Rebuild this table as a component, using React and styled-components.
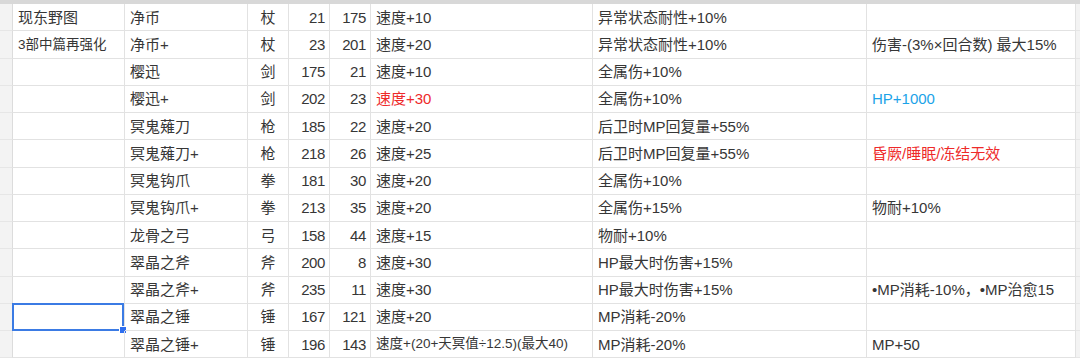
import React from "react";
import styled, { createGlobalStyle, css } from "styled-components";

const Global = createGlobalStyle`
  html, body { margin: 0; padding: 0; background: #ffffff; }
  body { font-family: "Liberation Sans", "Noto Sans CJK SC", sans-serif; }
`;

const Page = styled.div`
  width: 1080px;
  height: 361px;
  overflow: hidden;
  background: #ffffff;
`;

const HeaderBand = styled.div`
  height: 4px;
  background: #d8d8d8;
`;

const Sheet = styled.div`
  display: grid;
  grid-template-columns: 13px 112px 123px 41px 41px 41px 222px 274px 209px 1fr;
  grid-auto-rows: 27.25px;
`;

const Cell = styled.div`
  position: relative;
  box-sizing: border-box;
  border-right: 1px solid #e2e2e2;
  border-bottom: 1px solid #e2e2e2;
  display: flex;
  align-items: center;
  padding: 0 5px;
  font-size: ${(p) => (p.$small ? "13.5px" : "15px")};
  line-height: 1;
  color: ${(p) => p.$color || "#363636"};
  white-space: nowrap;
  overflow: visible;
  justify-content: ${(p) =>
    p.$align === "right" ? "flex-end" : p.$align === "center" ? "center" : "flex-start"};
  ${(p) =>
    p.$align === "right" &&
    css`
      padding-right: 4px;
      letter-spacing: -0.4px;
    `}
`;

const RowHead = styled.div`
  box-sizing: border-box;
  background: #f3f3f3;
  border-right: 1px solid #dcdcdc;
  border-bottom: 1px solid #e6e6e6;
`;

const Gutter = styled.div`
  box-sizing: border-box;
  background: #f3f3f3;
  border-bottom: 1px solid #e6e6e6;
`;

const Selection = styled.div`
  position: absolute;
  top: -1px;
  left: -1px;
  right: 0;
  bottom: -1px;
  border: 2px solid #3b7be4;
  pointer-events: none;
`;

const Handle = styled.div`
  position: absolute;
  right: -5px;
  bottom: -5px;
  width: 6px;
  height: 6px;
  background: #2f6ff0;
  border: 1px solid #ffffff;
`;

const RED = "#ee2a2a";
const BLUE = "#1ba3e8";

const rows = [
  { a: "现东野图", b: "净币", c: "杖", d: "21", e: "175", f: "速度+10", g: "异常状态耐性+10%", h: "" },
  { a: "3部中篇再强化", aSmall: true, b: "净币+", c: "杖", d: "23", e: "201", f: "速度+20", g: "异常状态耐性+10%", h: "伤害-(3%×回合数) 最大15%" },
  { a: "", b: "樱迅", c: "剑", d: "175", e: "21", f: "速度+10", g: "全属伤+10%", h: "" },
  { a: "", b: "樱迅+", c: "剑", d: "202", e: "23", f: "速度+30", fColor: RED, g: "全属伤+10%", h: "HP+1000", hColor: BLUE },
  { a: "", b: "冥鬼薙刀", c: "枪", d: "185", e: "22", f: "速度+20", g: "后卫时MP回复量+55%", h: "" },
  { a: "", b: "冥鬼薙刀+", c: "枪", d: "218", e: "26", f: "速度+25", g: "后卫时MP回复量+55%", h: "昏厥/睡眠/冻结无效", hColor: RED },
  { a: "", b: "冥鬼钩爪", c: "拳", d: "181", e: "30", f: "速度+20", g: "全属伤+10%", h: "" },
  { a: "", b: "冥鬼钩爪+", c: "拳", d: "213", e: "35", f: "速度+20", g: "全属伤+15%", h: "物耐+10%" },
  { a: "", b: "龙骨之弓", c: "弓", d: "158", e: "44", f: "速度+15", g: "物耐+10%", h: "" },
  { a: "", b: "翠晶之斧", c: "斧", d: "200", e: "8", f: "速度+30", g: "HP最大时伤害+15%", h: "" },
  { a: "", b: "翠晶之斧+", c: "斧", d: "235", e: "11", f: "速度+30", g: "HP最大时伤害+15%", h: "•MP消耗-10%，•MP治愈15" },
  { a: "", selected: true, b: "翠晶之锤", c: "锤", d: "167", e: "121", f: "速度+20", g: "MP消耗-20%", h: "" },
  { a: "", b: "翠晶之锤+", c: "锤", d: "196", e: "143", f: "速度+(20+天冥值÷12.5)(最大40)", fSmall: true, g: "MP消耗-20%", h: "MP+50" },
];

export default function App() {
  return (
    <Page>
      <Global />
      <HeaderBand />
      <Sheet>
        {rows.map((r, i) => (
          <React.Fragment key={i}>
            <RowHead />
            <Cell $small={r.aSmall}>
              {r.a}
              {r.selected && (
                <Selection>
                  <Handle />
                </Selection>
              )}
            </Cell>
            <Cell>{r.b}</Cell>
            <Cell $align="center">{r.c}</Cell>
            <Cell $align="right">{r.d}</Cell>
            <Cell $align="right">{r.e}</Cell>
            <Cell $small={r.fSmall} $color={r.fColor}>{r.f}</Cell>
            <Cell>{r.g}</Cell>
            <Cell $color={r.hColor}>{r.h}</Cell>
            <Gutter />
          </React.Fragment>
        ))}
      </Sheet>
    </Page>
  );
}
